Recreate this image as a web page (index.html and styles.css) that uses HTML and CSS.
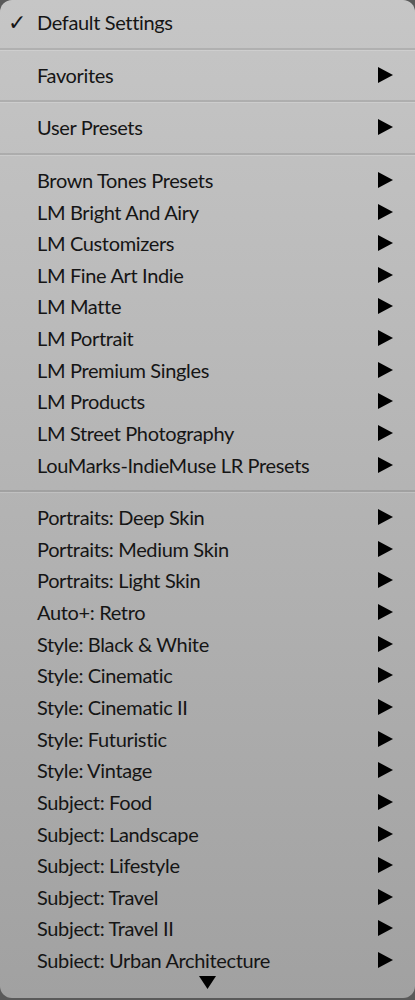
FILE: index.html
```html
<!DOCTYPE html>
<html lang="en">
<head>
  <meta charset="UTF-8" />
  <meta name="viewport" content="width=device-width, initial-scale=1.0" />
  <title>Presets</title>
  <link rel="stylesheet" href="styles.css">
</head>
<body>
  <div class="menu">
    <div class="list">
      <div class="section first">
        <div class="item checked"><span class="check">&#10003;</span>Default Settings</div>
      </div>
      <div class="section">
        <div class="item">Favorites<svg class="arrow" viewBox="0 0 15 16"><polygon points="0,0 15,8 0,16"/></svg></div>
      </div>
      <div class="section">
        <div class="item">User Presets<svg class="arrow" viewBox="0 0 15 16"><polygon points="0,0 15,8 0,16"/></svg></div>
      </div>
      <div class="section">
        <div class="item">Brown Tones Presets<svg class="arrow" viewBox="0 0 15 16"><polygon points="0,0 15,8 0,16"/></svg></div>
        <div class="item">LM Bright And Airy<svg class="arrow" viewBox="0 0 15 16"><polygon points="0,0 15,8 0,16"/></svg></div>
        <div class="item">LM Customizers<svg class="arrow" viewBox="0 0 15 16"><polygon points="0,0 15,8 0,16"/></svg></div>
        <div class="item">LM Fine Art Indie<svg class="arrow" viewBox="0 0 15 16"><polygon points="0,0 15,8 0,16"/></svg></div>
        <div class="item">LM Matte<svg class="arrow" viewBox="0 0 15 16"><polygon points="0,0 15,8 0,16"/></svg></div>
        <div class="item">LM Portrait<svg class="arrow" viewBox="0 0 15 16"><polygon points="0,0 15,8 0,16"/></svg></div>
        <div class="item">LM Premium Singles<svg class="arrow" viewBox="0 0 15 16"><polygon points="0,0 15,8 0,16"/></svg></div>
        <div class="item">LM Products<svg class="arrow" viewBox="0 0 15 16"><polygon points="0,0 15,8 0,16"/></svg></div>
        <div class="item">LM Street Photography<svg class="arrow" viewBox="0 0 15 16"><polygon points="0,0 15,8 0,16"/></svg></div>
        <div class="item">LouMarks-IndieMuse LR Presets<svg class="arrow" viewBox="0 0 15 16"><polygon points="0,0 15,8 0,16"/></svg></div>
      </div>
      <div class="section">
        <div class="item">Portraits: Deep Skin<svg class="arrow" viewBox="0 0 15 16"><polygon points="0,0 15,8 0,16"/></svg></div>
        <div class="item">Portraits: Medium Skin<svg class="arrow" viewBox="0 0 15 16"><polygon points="0,0 15,8 0,16"/></svg></div>
        <div class="item">Portraits: Light Skin<svg class="arrow" viewBox="0 0 15 16"><polygon points="0,0 15,8 0,16"/></svg></div>
        <div class="item">Auto+: Retro<svg class="arrow" viewBox="0 0 15 16"><polygon points="0,0 15,8 0,16"/></svg></div>
        <div class="item">Style: Black &amp; White<svg class="arrow" viewBox="0 0 15 16"><polygon points="0,0 15,8 0,16"/></svg></div>
        <div class="item">Style: Cinematic<svg class="arrow" viewBox="0 0 15 16"><polygon points="0,0 15,8 0,16"/></svg></div>
        <div class="item">Style: Cinematic II<svg class="arrow" viewBox="0 0 15 16"><polygon points="0,0 15,8 0,16"/></svg></div>
        <div class="item">Style: Futuristic<svg class="arrow" viewBox="0 0 15 16"><polygon points="0,0 15,8 0,16"/></svg></div>
        <div class="item">Style: Vintage<svg class="arrow" viewBox="0 0 15 16"><polygon points="0,0 15,8 0,16"/></svg></div>
        <div class="item">Subject: Food<svg class="arrow" viewBox="0 0 15 16"><polygon points="0,0 15,8 0,16"/></svg></div>
        <div class="item">Subject: Landscape<svg class="arrow" viewBox="0 0 15 16"><polygon points="0,0 15,8 0,16"/></svg></div>
        <div class="item">Subject: Lifestyle<svg class="arrow" viewBox="0 0 15 16"><polygon points="0,0 15,8 0,16"/></svg></div>
        <div class="item">Subject: Travel<svg class="arrow" viewBox="0 0 15 16"><polygon points="0,0 15,8 0,16"/></svg></div>
        <div class="item">Subject: Travel II<svg class="arrow" viewBox="0 0 15 16"><polygon points="0,0 15,8 0,16"/></svg></div>
        <div class="item">Subject: Urban Architecture<svg class="arrow" viewBox="0 0 15 16"><polygon points="0,0 15,8 0,16"/></svg></div>
      </div>
    </div>
    <div class="more">
      <svg class="down" viewBox="0 0 17 13"><polygon points="0,0 17,0 8.5,13"/></svg>
    </div>
  </div>
</body>
</html>
```

FILE: styles.css
```css
html, body {
  margin: 0;
  padding: 0;
}
body {
  background: #5a5a5a;
  font-family: Lato, 'Liberation Sans', sans-serif;
  color: #151515;
}
.menu {
  width: 415px;
  height: 998px;
  border-radius: 12px;
  background: linear-gradient(to bottom, #c6c6c6, #a1a1a1);
  display: flex;
  flex-direction: column;
  overflow: hidden;
}
.list {
  height: 968px;
  overflow: hidden;
}
.section {
  padding: 9.45px 0;
  border-top: 2px solid rgba(0, 0, 0, 0.1);
  box-shadow: inset 0 1px 0 rgba(255, 255, 255, 0.18);
}
.section.first {
  padding-top: 6.5px;
  border-top: none;
  box-shadow: none;
}
.item {
  height: 31.65px;
  display: flex;
  align-items: center;
  padding-left: 37px;
  padding-right: 22px;
  font-size: 20px;
  letter-spacing: -0.35px;
  font-variant-ligatures: none;
  position: relative;
  white-space: nowrap;
}
.check {
  position: absolute;
  left: 8px;
  font-family: 'DejaVu Sans', sans-serif;
  font-size: 22px;
  font-weight: bold;
}
.arrow {
  width: 15px;
  height: 16px;
  margin-left: auto;
  fill: #000;
}
.more {
  flex: 1;
  display: flex;
  justify-content: center;
  padding-top: 8px;
}
.down {
  width: 17px;
  height: 13px;
  fill: #000;
}
```
